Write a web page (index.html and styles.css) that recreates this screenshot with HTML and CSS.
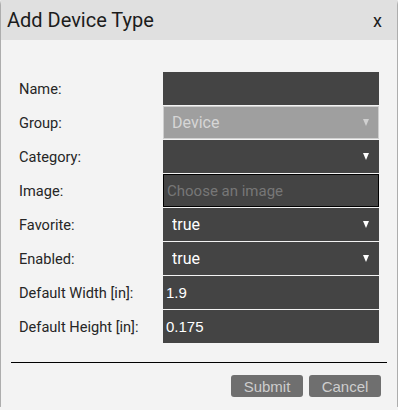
FILE: index.html
```html
<!doctype html>
<html lang="en">
<head>
  <meta charset="utf-8">
  <title>Add Device Type</title>
  <link rel="stylesheet" href="styles.css">
</head>
<body>
  <div class="dialog">
    <header>
      <div class="title">Add Device Type</div>
      <span class="close">x</span>
    </header>
    <form class="form">
      <label for="name">Name:</label>
      <input type="text" id="name" class="field">

      <label for="group">Group:</label>
      <div class="select disabled">
        <select id="group" class="field" disabled><option>Device</option></select>
      </div>

      <label for="category">Category:</label>
      <div class="select">
        <select id="category" class="field"><option></option></select>
      </div>

      <label for="image">Image:</label>
      <input type="text" id="image" class="field image" placeholder="Choose an image">

      <label for="favorite">Favorite:</label>
      <div class="select">
        <select id="favorite" class="field"><option>true</option></select>
      </div>

      <label for="enabled">Enabled:</label>
      <div class="select">
        <select id="enabled" class="field"><option>true</option></select>
      </div>

      <label for="width">Default Width [in]:</label>
      <input type="text" id="width" class="field num" value="1.9">

      <label for="height">Default Height [in]:</label>
      <input type="text" id="height" class="field num" value="0.175">
    </form>
    <hr>
    <div class="buttons">
      <button type="button">Submit</button>
      <button type="button">Cancel</button>
    </div>
  </div>
</body>
</html>
```
FILE: styles.css
```css
body {
  margin: 0;
  background: #f3f3f3;
  font-family: Roboto, sans-serif;
  color: #222;
  overflow: hidden;
}
.dialog {
  margin-left: 1px;
  width: 396px;
  height: 407px;
  background: #f3f3f3;
  box-shadow: 0 2px 3px rgba(0,0,0,0.75);
}
header {
  height: 40px;
  background: #e0e0e0;
  display: flex;
  align-items: center;
  justify-content: space-between;
  padding: 0 15px 0 6px;
}
.title {
  font-size: 20px;
  color: #1c1c1c;
}
.close {
  font-size: 18px;
  color: #1c1c1c;
}
.form {
  display: grid;
  grid-template-columns: 144px 216px;
  grid-auto-rows: 33px;
  row-gap: 1px;
  padding: 32px 0 0 18px;
  margin: 0;
}
label {
  font-size: 14.6px;
  display: flex;
  align-items: center;
  color: #262626;
}
.field {
  box-sizing: border-box;
  width: 100%;
  height: 33px;
  margin: 0;
  background: #444;
  border: 1px solid #444;
  color: #fff;
  font-family: Roboto, sans-serif;
  font-size: 16px;
  padding: 0 8px;
  outline: none;
  border-radius: 0;
}
.select {
  position: relative;
}
.select select {
  appearance: none;
  -webkit-appearance: none;
}
.select::after {
  content: "";
  position: absolute;
  right: 10px;
  top: 13px;
  border-left: 3.5px solid transparent;
  border-right: 3.5px solid transparent;
  border-top: 7px solid #fff;
}
.select.disabled select {
  background: #9f9f9f;
  border: 1px solid #cfcfcf;
  color: #d6d6d6;
  opacity: 1;
}
.select.disabled::after {
  border-top-color: #d0d0d0;
}
.image {
  border: 1px solid #000;
  padding: 0 3px;
  font-size: 15px;
}
.image::placeholder {
  color: #777;
}
.num {
  font-family: "Liberation Sans", Arial, sans-serif;
  font-size: 15px;
  padding: 0 2px;
}
hr {
  margin: 19px 10px 0 10px;
  border: 0;
  border-top: 1px solid #000;
}
.buttons {
  display: flex;
  justify-content: flex-end;
  gap: 6px;
  padding: 12px 16px 0 0;
}
button {
  width: 72px;
  height: 22px;
  background: #6f6f6f;
  color: #cdcdcd;
  border: 0;
  border-radius: 3px;
  font-family: "Liberation Sans", Arial, sans-serif;
  font-size: 15px;
  padding: 0;
}
```
